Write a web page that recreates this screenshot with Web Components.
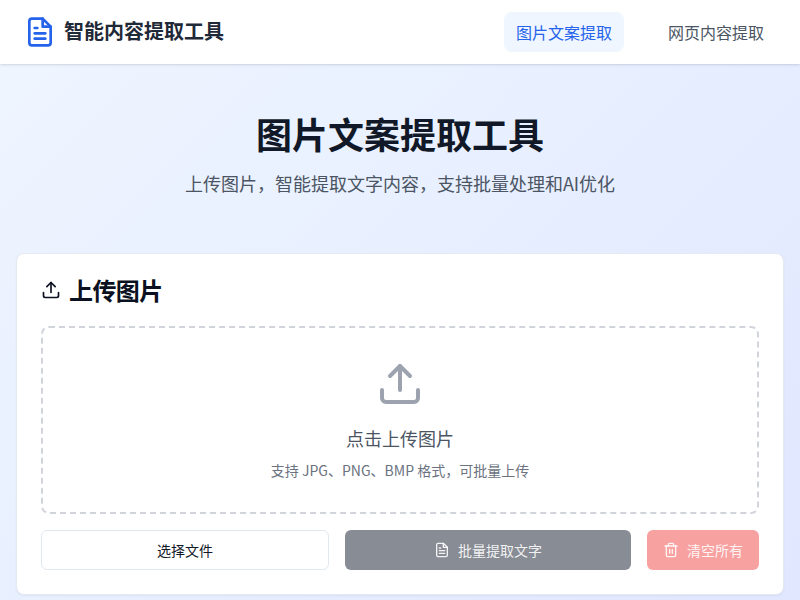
<!DOCTYPE html>
<html lang="zh-CN"><head><meta charset="utf-8"><title>图片文案提取工具</title>
<style>
html,body{margin:0;padding:0;height:600px;overflow:hidden}
body{font-family:"Noto Sans CJK SC","Noto Sans",sans-serif;background:linear-gradient(135deg,#eff6ff,#e0e7ff);color:#111827}
</style></head><body>
<app-header></app-header>
<app-hero></app-hero>
<upload-card></upload-card>
<script>
function def(name,html){customElements.define(name,class extends HTMLElement{constructor(){super();this.attachShadow({mode:'open'}).innerHTML=html}})}
def('nav-tab',`<style>:host{display:block}
div{height:40px;padding:0 12px;display:flex;align-items:center;border-radius:8px;font-size:16px;line-height:24px;color:#4b5563}
:host([active]) div{background:#eff6ff;color:#2563eb}</style><div><slot></slot></div>`);
def('app-header',`<style>:host{display:flex;height:64px;box-sizing:border-box;padding:0 24px;align-items:center;justify-content:space-between;background:#fff;box-shadow:0 1px 3px rgba(0,0,0,.1),0 1px 2px -1px rgba(0,0,0,.1)}
.logo{display:flex;align-items:center;gap:8px;font-size:20px;line-height:28px;font-weight:700;color:#1f2937}
.logo span{padding-bottom:2px}
svg{display:block}nav{display:flex;gap:32px}</style>
<div class="logo"><svg width="32" height="32" viewBox="0 0 24 24" fill="none" stroke="#2563eb" stroke-width="2" stroke-linecap="round" stroke-linejoin="round"><path d="M14 2H6a2 2 0 0 0-2 2v16a2 2 0 0 0 2 2h12a2 2 0 0 0 2-2V8z"/><path d="M14 2v6h6"/><path d="M16 13H8M16 17H8M10 9H8"/></svg><span>智能内容提取工具</span></div>
<nav><nav-tab active>图片文案提取</nav-tab><nav-tab>网页内容提取</nav-tab></nav>`);
def('app-hero',`<style>:host{display:block;height:189px;box-sizing:border-box;padding-top:42px;text-align:center}
h1{margin:0;font-size:36px;line-height:54px;font-weight:700;color:#111827}
p{margin:9px 0 0;font-size:18px;line-height:28px;color:#4b5563}</style>
<h1>图片文案提取工具</h1><p>上传图片，智能提取文字内容，支持批量处理和AI优化</p>`);
def('drop-zone',`<style>:host{display:flex;flex-direction:column;align-items:center;height:188px;box-sizing:border-box;border:2px dashed #d1d5db;border-radius:8px;padding-top:32px}
svg{display:block}.t{margin-top:16px;font-size:18px;line-height:28px;color:#4b5563}.s{margin-top:8px;font-size:14px;line-height:20px;color:#6b7280}</style>
<svg width="48" height="48" viewBox="0 0 24 24" fill="none" stroke="#9ca3af" stroke-width="2" stroke-linecap="round" stroke-linejoin="round"><path d="M21 15v4a2 2 0 0 1-2 2H5a2 2 0 0 1-2-2v-4"/><path d="M17 8l-5-5-5 5"/><path d="M12 3v12"/></svg>
<div class="t">点击上传图片</div><div class="s">支持 JPG、PNG、BMP 格式，可批量上传</div>`);
def('ui-button',`<style>:host{display:block}
div{height:40px;box-sizing:border-box;display:flex;align-items:center;justify-content:center;gap:8px;border-radius:6px;font-size:14px;padding:0 16px;white-space:nowrap}
:host([kind=outline]) div{background:#fff;border:1px solid #e2e8f0;color:#111827}
:host([kind=primary]) div{background:#888c94;color:rgba(255,255,255,.9)}
:host([kind=danger]) div{background:#f8a1a1;color:rgba(255,255,255,.9)}
::slotted(svg){display:block}</style><div><slot></slot></div>`);
def('upload-card',`<style>:host{display:block;margin:0 16px;height:342px;box-sizing:border-box;background:#fff;border:1px solid #e5e9f2;border-radius:8px;padding:24px;box-shadow:0 1px 2px rgba(0,0,0,.05)}
h2{margin:0 0 24px;display:flex;align-items:center;gap:8px;font-size:24px;line-height:24px;height:24px;font-weight:600;letter-spacing:-.025em;color:#0b1120}
h2 svg{display:block}.row{display:flex;gap:16px;margin-top:16px}.a{flex:288 1 0}.b{flex:286 1 0}</style>
<h2><svg width="20" height="20" viewBox="0 0 24 24" fill="none" stroke="#0b1120" stroke-width="2" stroke-linecap="round" stroke-linejoin="round"><path d="M21 15v4a2 2 0 0 1-2 2H5a2 2 0 0 1-2-2v-4"/><path d="M17 8l-5-5-5 5"/><path d="M12 3v12"/></svg><span>上传图片</span></h2>
<drop-zone></drop-zone>
<div class="row"><ui-button class="a" kind="outline">选择文件</ui-button>
<ui-button class="b" kind="primary"><svg width="16" height="16" viewBox="0 0 24 24" fill="none" stroke="currentColor" stroke-width="2" stroke-linecap="round" stroke-linejoin="round"><path d="M14 2H6a2 2 0 0 0-2 2v16a2 2 0 0 0 2 2h12a2 2 0 0 0 2-2V8z"/><path d="M14 2v6h6"/><path d="M16 13H8M16 17H8M10 9H8"/></svg>批量提取文字</ui-button>
<ui-button kind="danger"><svg width="16" height="16" viewBox="0 0 24 24" fill="none" stroke="currentColor" stroke-width="2" stroke-linecap="round" stroke-linejoin="round"><path d="M3 6h18"/><path d="M19 6v14a2 2 0 0 1-2 2H7a2 2 0 0 1-2-2V6"/><path d="M8 6V4a2 2 0 0 1 2-2h4a2 2 0 0 1 2 2v2"/><path d="M10 11v6M14 11v6"/></svg>清空所有</ui-button></div>`);
</script>
</body></html>
